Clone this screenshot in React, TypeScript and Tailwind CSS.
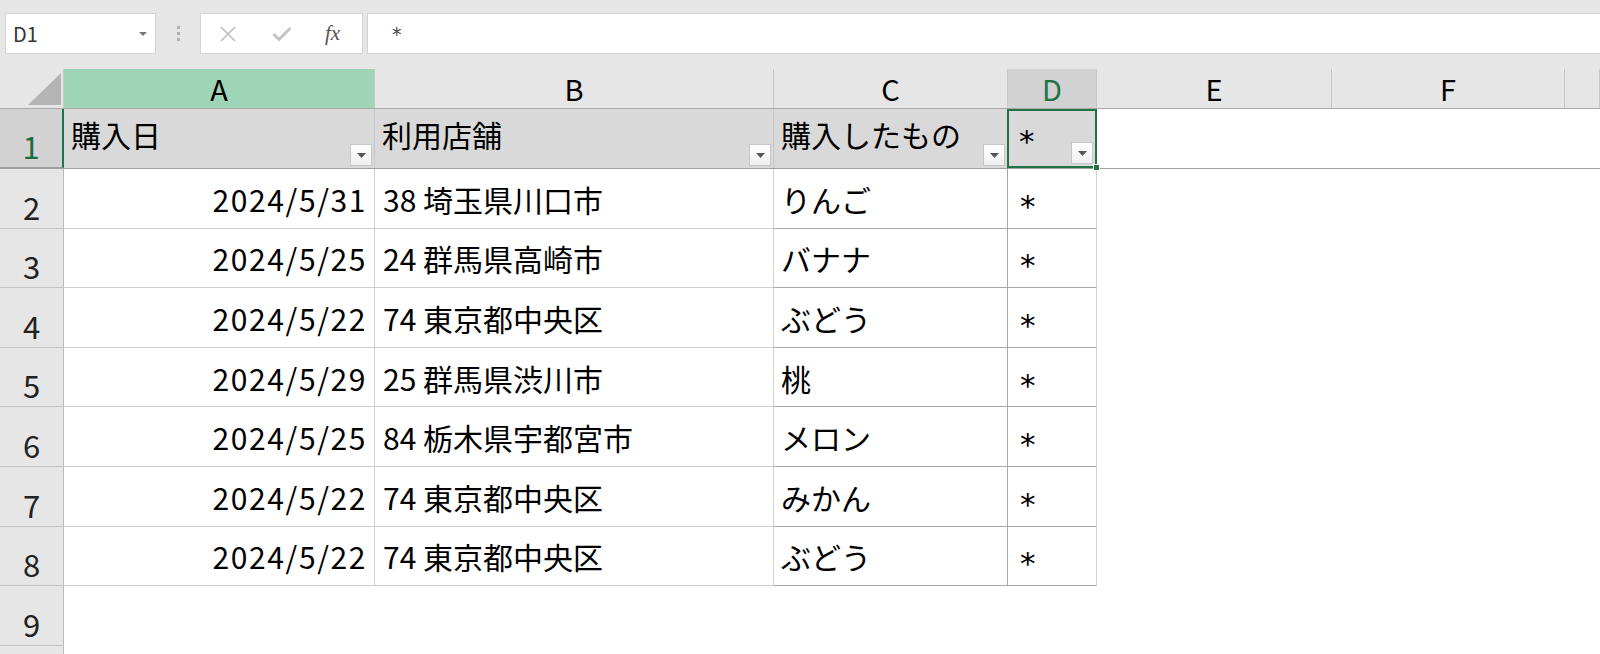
import React from "react";

const font = { fontFamily: '"Noto Sans CJK JP", "Noto Sans", sans-serif' };

const cols = [
  { key: "A", w: "w-[311px]" },
  { key: "B", w: "w-[399px]" },
  { key: "C", w: "w-[234px]" },
  { key: "D", w: "w-[89px]" },
];

const extra = [
  { key: "E", w: "w-[235px]" },
  { key: "F", w: "w-[233px]" },
  { key: "G", w: "flex-1" },
];

const rows = [
  ["2024/5/31", "38 埼玉県川口市", "りんご", "*"],
  ["2024/5/25", "24 群馬県高崎市", "バナナ", "*"],
  ["2024/5/22", "74 東京都中央区", "ぶどう", "*"],
  ["2024/5/29", "25 群馬県渋川市", "桃", "*"],
  ["2024/5/25", "84 栃木県宇都宮市", "メロン", "*"],
  ["2024/5/22", "74 東京都中央区", "みかん", "*"],
  ["2024/5/22", "74 東京都中央区", "ぶどう", "*"],
];

const headers = ["購入日", "利用店舗", "購入したもの", "*"];

function FilterButton() {
  return (
    <div className="absolute right-[2px] bottom-[2px] w-[22px] h-[22px] bg-gradient-to-b from-white to-[#f0f0f0] border border-[#c6c6c6] flex items-center justify-center">
      <svg width="9" height="5" viewBox="0 0 9 5">
        <path d="M0 0 L9 0 L4.5 5 Z" fill="#555" />
      </svg>
    </div>
  );
}

// asterisk drawn in a font whose glyph sits on the middle line, like the sheet's
function Star() {
  return (
    <span
      className="inline-block text-[31px] leading-none translate-y-[7px]"
      style={{ fontFamily: '"DejaVu Sans", sans-serif' }}
    >
      *
    </span>
  );
}

function RowNum({ n, active }: { n?: number; active?: boolean }) {
  return (
    <div
      className={
        "w-[64px] shrink-0 h-full flex items-end justify-center text-[31px] leading-none border-b " +
        (active
          ? "bg-[#d2d2d2] text-[#1e6b41] border-r-2 border-r-[#217346] border-b-[#9e9e9e]"
          : "bg-[#e6e6e6] text-[#222] border-r border-r-[#bcbcbc] border-b-[#c4c4c4]")
      }
    >
      <span className="pb-[6px]">{n}</span>
    </div>
  );
}

export default function App() {
  return (
    <div className="w-[1600px] h-[654px] overflow-hidden bg-white text-black" style={font}>
      {/* formula bar */}
      <div className="h-[69px] bg-[#e6e6e6] flex items-start pt-[13px] pl-[5px]">
        <div className="w-[151px] h-[41px] bg-white border border-[#d4d4d4] flex items-center justify-between pl-[7px] pr-[8px]">
          <span className="text-[20px] text-[#333]">D1</span>
          <svg width="8" height="4" viewBox="0 0 8 4">
            <path d="M0 0 L8 0 L4 4 Z" fill="#777" />
          </svg>
        </div>
        <div className="w-[44px] h-[41px] flex flex-col items-center justify-center gap-[3px]">
          <div className="w-[3px] h-[3px] bg-[#b0b0b0]" />
          <div className="w-[3px] h-[3px] bg-[#b0b0b0]" />
          <div className="w-[3px] h-[3px] bg-[#b0b0b0]" />
        </div>
        <div className="w-[163px] h-[41px] bg-white border border-[#d4d4d4] flex items-center pl-[18px] gap-[35px]">
          <svg width="18" height="18" viewBox="0 0 18 18">
            <path d="M2 2 L16 16 M16 2 L2 16" stroke="#bdbdbd" strokeWidth="1.6" />
          </svg>
          <svg width="20" height="16" viewBox="0 0 20 16">
            <path d="M1.5 8 L7 13.5 L18.5 2" stroke="#c4c4c4" strokeWidth="3" fill="none" />
          </svg>
          <span
            className="text-[21px] italic text-[#555] leading-none -ml-[2px]"
            style={{ fontFamily: '"Liberation Serif", serif' }}
          >
            fx
          </span>
        </div>
        <div className="flex-1 ml-[4px] h-[41px] bg-white border-y border-l border-[#d4d4d4] flex items-center pl-[24px]">
          <span
            className="text-[19px] text-[#444] translate-y-[1px]"
            style={{ fontFamily: '"DejaVu Sans", sans-serif' }}
          >
            *
          </span>
        </div>
      </div>

      {/* column headers */}
      <div className="h-[40px] flex bg-[#e6e6e6] border-b border-[#ababab]">
        <div className="w-[64px] shrink-0 relative border-r border-[#c8c8c8]">
          <svg className="absolute right-[2px] bottom-[3px]" width="33" height="32" viewBox="0 0 33 32">
            <path d="M33 0 L33 32 L0 32 Z" fill="#b4b4b4" />
          </svg>
        </div>
        {cols.map((c) => (
          <div
            key={c.key}
            className={
              c.w +
              " shrink-0 flex items-center justify-center text-[29px] border-r border-[#c8c8c8] " +
              (c.key === "A"
                ? "bg-[#9fd5b7] text-black"
                : c.key === "D"
                ? "bg-[#d2d2d2] text-[#217346]"
                : "text-black")
            }
          >
            {c.key}
          </div>
        ))}
        {extra.map((c) => (
          <div
            key={c.key}
            className={c.w + " shrink-0 flex items-center justify-center text-[29px] border-r border-[#c8c8c8]"}
          >
            {c.key !== "G" ? c.key : ""}
          </div>
        ))}
      </div>

      {/* row 1 */}
      <div className="h-[60px] flex border-b border-[#9e9e9e]">
        <RowNum n={1} active />
        {headers.map((h, i) => (
          <div
            key={i}
            className={
              cols[i].w +
              " shrink-0 relative bg-[#d9d9d9] flex items-center pl-[7px] pb-[8px] text-[30px] " +
              (i === 3
                ? "border-2 border-[#217346] -ml-[1px] w-[90px] pl-[10px]"
                : "border-r border-[#c6c6c6]")
            }
          >
            {i === 3 ? <Star /> : h}
            <FilterButton />
            {i === 3 && (
              <div className="absolute -right-[5px] -bottom-[5px] w-[7px] h-[7px] bg-[#217346] border border-white" />
            )}
          </div>
        ))}
        <div className="flex-1" />
      </div>

      {/* data rows */}
      {rows.map((r, ri) => (
        <div key={ri} className="h-[59.6px] flex">
          <RowNum n={ri + 2} />
          {r.map((v, ci) => (
            <div
              key={ci}
              className={
                cols[ci].w +
                " shrink-0 flex items-center text-[30px] border-b pt-[2px] " +
                (ci === 0
                  ? "justify-end pr-[7px] tracking-[1.6px] border-r border-[#cfcfcf] border-b-[#cfcfcf]"
                  : ci === 1
                  ? "pl-[8px] border-r border-[#cfcfcf] border-b-[#cfcfcf]"
                  : ci === 2
                  ? "pl-[7px] border-r border-[#a8a8a8] border-b-[#a8a8a8]"
                  : "pl-[12px] border-r border-[#d4d4d4] border-b-[#a8a8a8]")
              }
            >
              {ci === 3 ? <Star /> : v}
            </div>
          ))}
          <div className="flex-1" />
        </div>
      ))}

      {/* empty rows */}
      <div className="h-[59.6px] flex">
        <RowNum n={9} />
        <div className="flex-1" />
      </div>
      <div className="h-[59.6px] flex">
        <RowNum />
        <div className="flex-1" />
      </div>
    </div>
  );
}
